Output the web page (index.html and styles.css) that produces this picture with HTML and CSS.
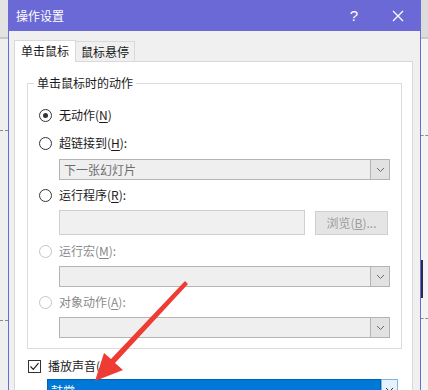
FILE: index.html
```html
<!DOCTYPE html>
<html lang="zh-CN">
<head>
    <meta charset="UTF-8">
    <title>操作设置</title>
    <link rel="stylesheet" href="styles.css">
</head>
<body>
<div class="screen">
    <div class="side side-left">
        <div class="rule"></div>
        <div class="dots dots-a"></div>
        <div class="dots dots-b"></div>
    </div>

    <div class="dialog">
        <div class="titlebar">
            <span class="title">操作设置</span>
            <span class="tb-btn">?</span>
            <span class="tb-btn">
                <svg width="12" height="12" viewBox="0 0 12 12"><path d="M1 1L11 11M11 1L1 11" stroke="#fff" stroke-width="1.3"/></svg>
            </span>
        </div>

        <div class="dlg-body">
            <div class="tabs">
                <div class="tab active">单击鼠标</div>
                <div class="tab">鼠标悬停</div>
            </div>

            <div class="panel">
                <div class="group">
                    <span class="legend">单击鼠标时的动作</span>

                    <label class="opt first"><span class="radio checked"></span>无动作(<u>N</u>)</label>

                    <label class="opt gap12"><span class="radio"></span>超链接到(<u>H</u>):</label>
                    <div class="select gap8">
                        <span class="val">下一张幻灯片</span>
                        <span class="drop"><svg width="9" height="6" viewBox="0 0 9 6"><path d="M1 1L4.5 4.5L8 1" fill="none" stroke="#6a6a6a" stroke-width="1"/></svg></span>
                    </div>

                    <label class="opt gap7"><span class="radio"></span>运行程序(<u>R</u>):</label>
                    <div class="prog gap7">
                        <span class="textbox"></span>
                        <span class="browse">浏览(<u>B</u>)...</span>
                    </div>

                    <label class="opt disabled gap8"><span class="radio"></span>运行宏(<u>M</u>):</label>
                    <div class="select gap7">
                        <span class="val"></span>
                        <span class="drop"><svg width="9" height="6" viewBox="0 0 9 6"><path d="M1 1L4.5 4.5L8 1" fill="none" stroke="#6a6a6a" stroke-width="1"/></svg></span>
                    </div>

                    <label class="opt disabled gap7"><span class="radio"></span>对象动作(<u>A</u>):</label>
                    <div class="select gap7">
                        <span class="val"></span>
                        <span class="drop"><svg width="9" height="6" viewBox="0 0 9 6"><path d="M1 1L4.5 4.5L8 1" fill="none" stroke="#6a6a6a" stroke-width="1"/></svg></span>
                    </div>
                </div>

                <label class="opt check-row">
                    <span class="check"><svg width="11" height="11" viewBox="0 0 11 11"><path d="M1.5 5.5L4.3 8.3L9.5 2.2" fill="none" stroke="#222" stroke-width="1.2"/></svg></span>播放声音(<u>P</u>):
                </label>
                <div class="sound">
                    <span class="val">鼓掌</span>
                    <span class="drop"><svg width="9" height="6" viewBox="0 0 9 6"><path d="M1 1L4.5 4.5L8 1" fill="none" stroke="#333" stroke-width="1"/></svg></span>
                </div>
            </div>
        </div>
    </div>

    <div class="side side-right">
        <div class="rule"></div>
        <div class="dots dots-c"></div>
        <div class="bar"></div>
        <div class="dots dots-d"></div>
    </div>

    <svg class="arrow" width="428" height="390" viewBox="0 0 428 390">
        <polygon points="95,381 104,353 111,359 185,281 188,284 115,363 123,370" fill="#ee3b34"/>
    </svg>
</div>
</body>
</html>
```

FILE: styles.css
```css
body { margin: 0; font-family: "Noto Sans CJK SC", "Noto Sans", sans-serif; font-size: 12px; color: #1a1a1a; }
.screen { position: relative; display: flex; width: 428px; height: 390px; overflow: hidden; background: #efefef; }

.side { width: 8px; flex: none; background: #eeeeee; }
.side-left { background: linear-gradient(#e3e3e3 0 37px, #efefef 37px); }
.side-right { width: 7px; background: linear-gradient(#dcdcdc 0 37px, #f4f4f4 37px); }
.side .rule { height: 2px; margin-top: 37px; background: #c9c9c9; }
.dots { height: 0; border-top: 1px dashed #8a8a8a; }
.dots-a { margin-top: 91px; }
.dots-b { margin-top: 189px; }
.dots-c { margin-top: 96px; }
.bar { width: 2px; height: 38px; margin-top: 124px; background: #2a2a4a; }
.dots-d { margin-top: 20px; }

.dialog { width: 411px; flex: none; border-left: 1px solid #6b69d6; border-right: 1px solid #6b69d6; background: #f0f0f0; }
.titlebar { height: 31px; display: flex; align-items: center; background: #6b69d6; color: #fff; padding-left: 7px; }
.title { flex: 1; font-size: 12px; line-height: 16px; }
.tb-btn { width: 44px; height: 31px; display: flex; align-items: center; justify-content: center; font-family: "Liberation Sans", sans-serif; font-size: 15px; }

.dlg-body { padding-top: 9px; }
.tabs { display: flex; align-items: flex-end; margin-left: 5px; }
.tab { height: 19px; padding: 0 5px; border: 1px solid #d9d9d9; border-bottom: none; line-height: 19px; }
.tab.active { height: 21px; padding: 0 6px; background: #fff; line-height: 19px; position: relative; z-index: 1; margin-bottom: -1px; }
.tab + .tab { border-left: none; }

.panel { height: 400px; margin: 0 7px 0 5px; background: #fff; border: 1px solid #d9d9d9; }

.group { position: relative; margin: 21px 10px 0 12px; padding: 23px 11px 10px; border: 1px solid #dcdcdc; }
.legend { position: absolute; top: -9px; left: 6px; padding: 0 3px; background: #fff; line-height: 16px; }

.opt { display: flex; align-items: center; height: 16px; line-height: 16px; }
.opt u { text-decoration: underline; text-underline-offset: 2px; }
.radio { width: 11px; height: 11px; border: 1px solid #333; border-radius: 50%; margin-right: 7px; display: flex; align-items: center; justify-content: center; }
.radio.checked::after { content: ""; width: 5px; height: 5px; border-radius: 50%; background: #333; }
.opt.disabled { color: #8a8a8a; }
.opt.disabled .radio { border-color: #c4c4c4; }

.gap7 { margin-top: 7px; }
.gap8 { margin-top: 8px; }
.gap12 { margin-top: 12px; }

.select { display: flex; height: 19px; margin-left: 20px; border: 1px solid #b4b4b4; background: #efefef; }
.select .val { flex: 1; padding-left: 4px; line-height: 19px; color: #6d6d6d; }
.select .drop { width: 18px; display: flex; align-items: center; justify-content: center; background: #e2e2e2; border-left: 1px solid #b4b4b4; }

.prog { display: flex; margin-left: 20px; height: 25px; }
.textbox { width: 244px; border: 1px solid #d0d0d0; background: #f0f0f0; }
.browse { width: 71px; height: 22px; margin-left: 10px; margin-top: 1px; border: 1px solid #cfcfcf; background: #e5e5e5; color: #9c9c9c; text-align: center; line-height: 22px; }

.check-row { margin: 9px 0 0 13px; }
.check { width: 11px; height: 11px; border: 1px solid #333; margin-right: 7px; display: flex; align-items: center; justify-content: center; }

.sound { display: flex; height: 21px; margin: 5px 0 0 32px; width: 351px; }
.sound .val { flex: 1; background: #0078d7; color: #fff; padding-left: 3px; line-height: 21px; border: 1px solid #0063b1; }
.sound .drop { width: 15px; display: flex; align-items: center; justify-content: center; background: #e5f1fb; border: 1px solid #7eb4ea; }

.arrow { position: absolute; left: 0; top: 0; pointer-events: none; }
```
